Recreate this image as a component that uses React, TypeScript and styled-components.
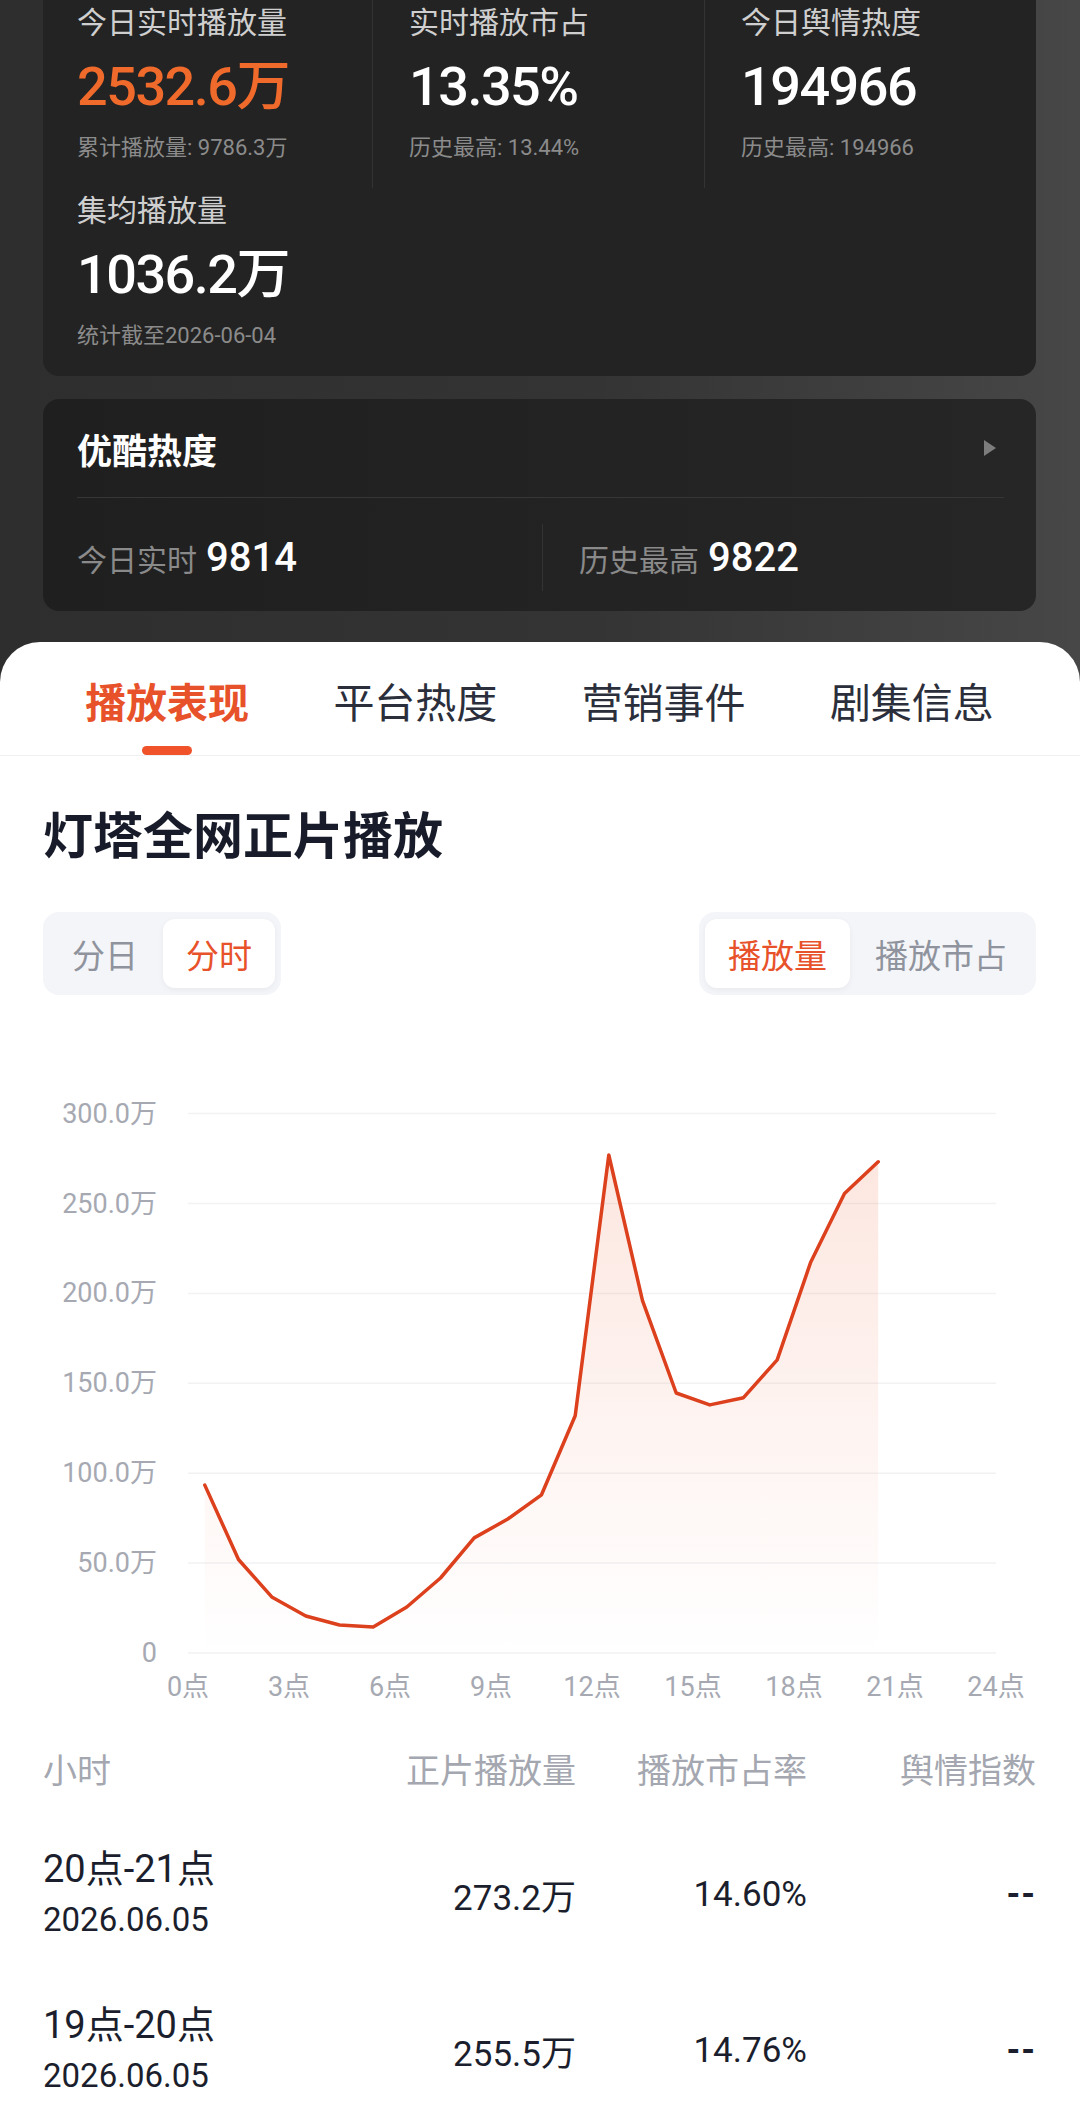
import styled, { createGlobalStyle } from 'styled-components';

const GlobalStyle = createGlobalStyle`
  html, body { margin: 0; padding: 0; }
  body {
    background: #ffffff;
    font-family: Roboto, "Noto Sans CJK SC", sans-serif;
    -webkit-font-smoothing: antialiased;
  }
`;

const Page = styled.div`
  width: 1080px;
  min-height: 2102px;
  display: flex;
  flex-direction: column;
  background: linear-gradient(90deg, #2e2e2e 0%, #343434 55%, #474747 100%);
`;

const DarkArea = styled.div`
  display: flex;
  flex-direction: column;
  gap: 23px;
  padding: 0 44px 31px 43px;
`;

/* ---- stats card ---- */
const StatsCard = styled.div`
  display: grid;
  grid-template-columns: 295px 332px 1fr;
  padding-left: 34px;
  background: #232323;
  border-radius: 0 0 16px 16px;
`;

const StatCell = styled.div<{ $divider?: boolean }>`
  padding: 3px 0 25px ${(p) => (p.$divider ? '36px' : '0')};
  border-left: ${(p) => (p.$divider ? '1px solid #333333' : 'none')};
`;

const StatLabel = styled.div`
  font-size: 30px;
  line-height: 40px;
  color: #cfcfcf;
`;

const StatValue = styled.div<{ $accent?: boolean }>`
  margin-top: 12px;
  font-size: 54px;
  line-height: 64px;
  font-weight: 500;
  letter-spacing: -1.5px;
  color: ${(p) => (p.$accent ? '#f06a2b' : '#ffffff')};
`;

const StatSub = styled.div`
  margin-top: 14px;
  font-size: 22px;
  line-height: 30px;
  color: #8b8b8b;
`;

/* ---- youku heat card ---- */
const HeatCard = styled.div`
  padding: 0 32px 0 34px;
  background: linear-gradient(90deg, #1f1f1f, #262626);
  border-radius: 16px;
`;

const HeatHead = styled.div`
  height: 98px;
  display: flex;
  align-items: center;
  justify-content: space-between;
  border-bottom: 1px solid #363636;
`;

const HeatTitle = styled.div`
  font-size: 35px;
  font-weight: 600;
  color: #ffffff;
`;

const Arrow = styled.span`
  width: 0;
  height: 0;
  margin-right: 8px;
  border-top: 8px solid transparent;
  border-bottom: 8px solid transparent;
  border-left: 12px solid #7d7d7d;
`;

const HeatRow = styled.div`
  display: grid;
  grid-template-columns: 465px 1fr;
  padding: 26px 0 20px;
`;

const HeatItem = styled.div<{ $divider?: boolean }>`
  height: 67px;
  display: flex;
  align-items: center;
  gap: 9px;
  padding-left: ${(p) => (p.$divider ? '36px' : '0')};
  border-left: ${(p) => (p.$divider ? '1px solid #333333' : 'none')};
`;

const HeatKey = styled.span`
  font-size: 30px;
  color: #8a8a8a;
`;

const HeatNum = styled.span`
  font-size: 40px;
  font-weight: 500;
  color: #ffffff;
`;

/* ---- white panel ---- */
const Panel = styled.div`
  flex: 1;
  background: #ffffff;
  border-radius: 40px 40px 0 0;
`;

const TabBar = styled.div`
  display: flex;
  padding: 0 44px 0 43px;
  border-bottom: 1px solid #f0f0f2;
`;

const Tab = styled.div`
  flex: 1;
  display: flex;
  flex-direction: column;
  align-items: center;
  padding-top: 40px;
`;

const TabText = styled.div<{ $active?: boolean }>`
  font-size: 41px;
  line-height: 44px;
  font-weight: ${(p) => (p.$active ? 600 : 400)};
  color: ${(p) => (p.$active ? '#e8522a' : '#2b2e3b')};
`;

const Indicator = styled.div<{ $active?: boolean }>`
  width: 50px;
  height: 9px;
  margin-top: 20px;
  border-radius: 5px;
  background: ${(p) => (p.$active ? '#f0532a' : 'transparent')};
`;

const SectionTitle = styled.h2`
  margin: 51px 0 0 43px;
  font-size: 50px;
  line-height: 60px;
  font-weight: 700;
  color: #181b29;
`;

const ToggleRow = styled.div`
  display: flex;
  justify-content: space-between;
  margin-top: 45px;
  padding: 0 44px 0 43px;
`;

const ToggleGroup = styled.div`
  display: flex;
  gap: 2px;
  padding: 7px 6px;
  background: #f4f5f8;
  border-radius: 16px;
`;

const ToggleItem = styled.div<{ $active?: boolean }>`
  height: 69px;
  display: flex;
  align-items: center;
  padding: 0 23px;
  font-size: 33px;
  border-radius: 12px;
  color: ${(p) => (p.$active ? '#e8522a' : '#8f939d')};
  background: ${(p) => (p.$active ? '#ffffff' : 'transparent')};
  box-shadow: ${(p) => (p.$active ? '0 2px 6px rgba(0,0,0,0.05)' : 'none')};
`;

const ChartSvg = styled.svg`
  display: block;
  margin-top: 64px;
  font-family: Roboto, "Noto Sans CJK SC", sans-serif;
`;

const Table = styled.div`
  margin-top: 30px;
  padding: 0 44px 0 43px;
`;

const TRow = styled.div<{ $head?: boolean }>`
  display: grid;
  grid-template-columns: 1fr 200px 231px 229px;
  align-items: center;
  padding: ${(p) => (p.$head ? '0' : '50px 0 4px')};
`;

const HeadCell = styled.div<{ $left?: boolean }>`
  font-size: 34px;
  line-height: 44px;
  color: #a4a7b0;
  text-align: ${(p) => (p.$left ? 'left' : 'right')};
`;

const HourTitle = styled.div`
  font-size: 38px;
  line-height: 52px;
  color: #1b1e2c;
`;

const HourDate = styled.div`
  font-size: 33px;
  line-height: 50px;
  color: #1b1e2c;
`;

const Cell = styled.div<{ $dash?: boolean }>`
  font-size: 35px;
  text-align: right;
  color: #1b1e2c;
  font-weight: ${(p) => (p.$dash ? 700 : 400)};
  letter-spacing: ${(p) => (p.$dash ? '1px' : '0')};
`;

const hourly = [
  93.4, 52, 31, 20.6, 15.6, 14.5, 25.6, 41.7, 64, 74.5, 88, 132, 277, 196, 144.6,
  138, 142, 163, 217.5, 255.5, 273.2,
];

const X0 = 188;
const HOUR = 33.667;
const Y0 = 594;
const PER = 1.798;
const px = (h: number) => X0 + h * HOUR;
const py = (v: number) => Y0 - v * PER;

const yTicks = [0, 50, 100, 150, 200, 250, 300];
const xTicks = [0, 3, 6, 9, 12, 15, 18, 21, 24];

const rows = [
  { hour: '20点-21点', date: '2026.06.05', play: '273.2万', share: '14.60%', idx: '--' },
  { hour: '19点-20点', date: '2026.06.05', play: '255.5万', share: '14.76%', idx: '--' },
];

function Chart() {
  const pts = hourly.map((v, i) => `${px(i + 0.5).toFixed(1)},${py(v).toFixed(1)}`);
  const line = 'M' + pts.join(' L');
  const area = `${line} L${px(hourly.length - 0.5)},${Y0} L${px(0.5)},${Y0} Z`;
  return (
    <ChartSvg width={1080} height={660} viewBox="0 0 1080 660">
      <defs>
        <linearGradient id="areaFill" x1="0" y1="0" x2="0" y2="1">
          <stop offset="0" stopColor="#f06e46" stopOpacity="0.17" />
          <stop offset="1" stopColor="#f06e46" stopOpacity="0" />
        </linearGradient>
      </defs>
      {yTicks.map((t) => (
        <g key={t}>
          <line x1={188} x2={996} y1={py(t)} y2={py(t)} stroke="#f1f2f4" strokeWidth={1.5} />
          <text x={157} y={py(t)} textAnchor="end" dominantBaseline="central" fontSize={27} fill="#a6a9b2">
            {t === 0 ? '0' : `${t}.0万`}
          </text>
        </g>
      ))}
      {xTicks.map((t) => (
        <text key={t} x={px(t)} y={628} textAnchor="middle" dominantBaseline="central" fontSize={27} fill="#a6a9b2">
          {t}点
        </text>
      ))}
      <path d={area} fill="url(#areaFill)" />
      <path d={line} fill="none" stroke="#dc401d" strokeWidth={3.5} strokeLinejoin="round" strokeLinecap="round" />
    </ChartSvg>
  );
}

export default function App() {
  return (
    <>
      <GlobalStyle />
      <Page>
        <DarkArea>
          <StatsCard>
            <StatCell>
              <StatLabel>今日实时播放量</StatLabel>
              <StatValue $accent>2532.6万</StatValue>
              <StatSub>累计播放量: 9786.3万</StatSub>
            </StatCell>
            <StatCell $divider>
              <StatLabel>实时播放市占</StatLabel>
              <StatValue>13.35%</StatValue>
              <StatSub>历史最高: 13.44%</StatSub>
            </StatCell>
            <StatCell $divider>
              <StatLabel>今日舆情热度</StatLabel>
              <StatValue>194966</StatValue>
              <StatSub>历史最高: 194966</StatSub>
            </StatCell>
            <StatCell>
              <StatLabel>集均播放量</StatLabel>
              <StatValue>1036.2万</StatValue>
              <StatSub>统计截至2026-06-04</StatSub>
            </StatCell>
          </StatsCard>

          <HeatCard>
            <HeatHead>
              <HeatTitle>优酷热度</HeatTitle>
              <Arrow />
            </HeatHead>
            <HeatRow>
              <HeatItem>
                <HeatKey>今日实时</HeatKey>
                <HeatNum>9814</HeatNum>
              </HeatItem>
              <HeatItem $divider>
                <HeatKey>历史最高</HeatKey>
                <HeatNum>9822</HeatNum>
              </HeatItem>
            </HeatRow>
          </HeatCard>
        </DarkArea>

        <Panel>
          <TabBar>
            {['播放表现', '平台热度', '营销事件', '剧集信息'].map((t, i) => (
              <Tab key={t}>
                <TabText $active={i === 0}>{t}</TabText>
                <Indicator $active={i === 0} />
              </Tab>
            ))}
          </TabBar>

          <SectionTitle>灯塔全网正片播放</SectionTitle>

          <ToggleRow>
            <ToggleGroup>
              <ToggleItem>分日</ToggleItem>
              <ToggleItem $active>分时</ToggleItem>
            </ToggleGroup>
            <ToggleGroup>
              <ToggleItem $active>播放量</ToggleItem>
              <ToggleItem>播放市占</ToggleItem>
            </ToggleGroup>
          </ToggleRow>

          <Chart />

          <Table>
            <TRow $head>
              <HeadCell $left>小时</HeadCell>
              <HeadCell>正片播放量</HeadCell>
              <HeadCell>播放市占率</HeadCell>
              <HeadCell>舆情指数</HeadCell>
            </TRow>
            {rows.map((r) => (
              <TRow key={r.hour}>
                <div>
                  <HourTitle>{r.hour}</HourTitle>
                  <HourDate>{r.date}</HourDate>
                </div>
                <Cell>{r.play}</Cell>
                <Cell>{r.share}</Cell>
                <Cell $dash>{r.idx}</Cell>
              </TRow>
            ))}
          </Table>
        </Panel>
      </Page>
    </>
  );
}
